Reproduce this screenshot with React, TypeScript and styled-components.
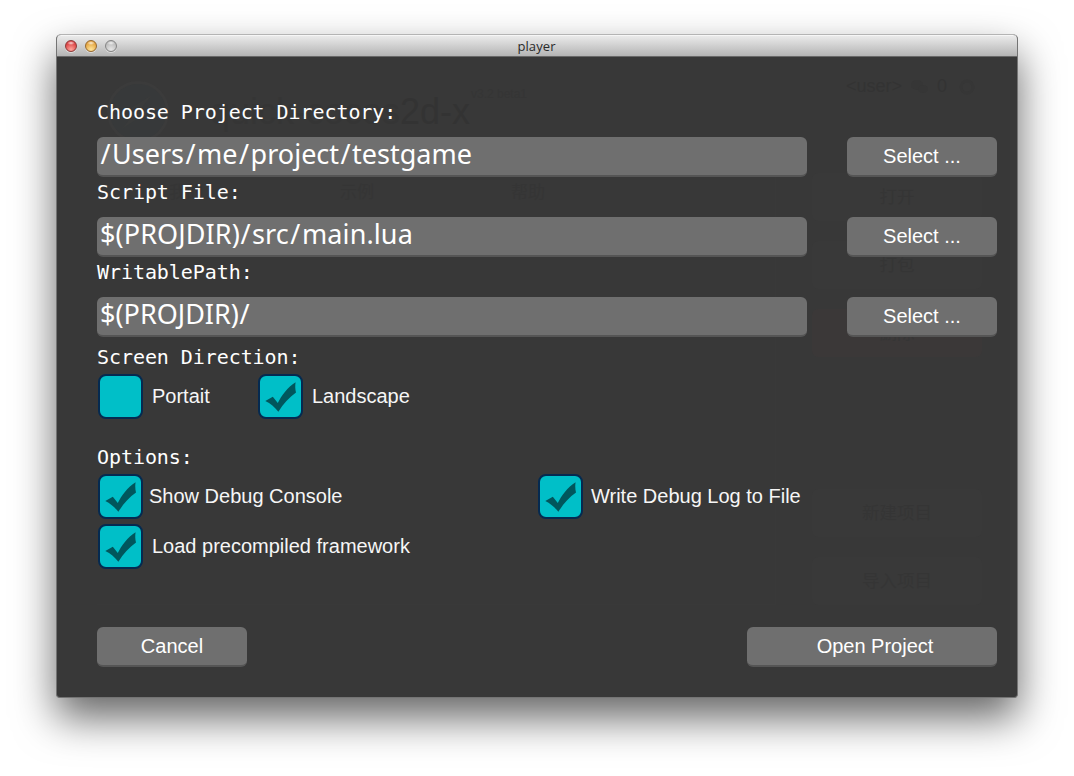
import React from 'react';
import styled, { createGlobalStyle } from 'styled-components';

const GlobalStyle = createGlobalStyle`
  * { box-sizing: border-box; }
  body { margin: 0; background: #fff; overflow: hidden; }
`;

const Desktop = styled.div`
  width: 1074px;
  height: 776px;
  padding: 34px 56px 0;
  font-family: 'Liberation Sans', Arial, sans-serif;
`;

const Window = styled.main`
  width: 962px;
  height: 664px;
  border: 1px solid #747474;
  border-top-color: #b4b4b4;
  border-radius: 5px 5px 4px 4px;
  background: #383838;
  overflow: hidden;
  box-shadow: 0 20px 42px rgba(0, 0, 0, 0.6);
`;

const TitleBar = styled.header`
  display: grid;
  grid-template-columns: 1fr auto 1fr;
  align-items: center;
  height: 22px;
  padding: 0 8px 1px;
  background: linear-gradient(#eaeaea, #b4b4b4);
  border-top: 1px solid #f6f6f6;
  border-bottom: 1px solid #686868;
`;

const Lights = styled.div`
  display: flex;
  gap: 8px;
`;

const Light = styled.span<{ $rim: string; $from: string; $to: string }>`
  width: 12px;
  height: 12px;
  border-radius: 50%;
  border: 1px solid ${(p) => p.$rim};
  background: radial-gradient(ellipse 4px 2px at 50% 20%, rgba(255, 255, 255, 0.8), transparent),
    radial-gradient(circle at 50% 85%, ${(p) => p.$to}, ${(p) => p.$from} 75%);
  box-shadow: 0 1px 0 rgba(255, 255, 255, 0.45);
`;

const Title = styled.h1`
  margin: 0 1px 0 0;
  font: 500 13px/18px 'Open Sans', sans-serif;
  letter-spacing: 0.1px;
  color: #2a2a2a;
`;

const Content = styled.div`
  position: relative;
  height: 640px;
`;

const Backdrop = styled.div`
  position: absolute;
  inset: 0;
  padding: 24px 35px 0 40px;
  font-family: 'Liberation Sans', 'Noto Sans CJK SC', sans-serif;
`;

const BackdropHead = styled.div`
  display: flex;
  align-items: flex-start;
  height: 92px;
`;

const Product = styled.span`
  width: 294px;
  margin-left: 7px;
  font-size: 36px;
  line-height: 61px;
  white-space: nowrap;
  text-align: right;
  color: #353535;
`;

const ProductSuffix = styled.span`
  color: #333;
`;

const Version = styled.span`
  flex: 1;
  margin-left: 1px;
  font-size: 12px;
  line-height: 26px;
  color: #353535;
`;

const Account = styled.div`
  display: flex;
  align-items: center;
  gap: 8px;
  height: 11px;
  margin-right: 5px;
  font-size: 18px;
  color: #333;
`;

const BackdropBody = styled.div`
  display: flex;
  justify-content: space-between;
`;

const BackdropTabs = styled.div`
  display: flex;
  gap: 21px;
  width: 679px;
  height: 432px;
  padding-left: 14px;
  font-size: 17px;
  line-height: 40px;
  border-right: 1px solid #393939;
  border-bottom: 1px solid #393939;
`;

const BackdropTab = styled.span`
  width: 150px;
  height: 40px;
  text-align: center;
  color: #353535;
`;

const BackdropActions = styled.div`
  display: flex;
  flex-direction: column;
  gap: 20px;
`;

const BackdropAction = styled.span<{ $tint?: string; $push?: boolean }>`
  width: 170px;
  height: 48px;
  margin-top: ${(p) => (p.$push ? '112px' : '0')};
  border-radius: 6px;
  font-size: 17.5px;
  line-height: 48px;
  text-align: center;
  background: ${(p) => p.$tint ?? '#393939'};
  color: #353535;
`;

const Form = styled.form`
  position: relative;
  display: flex;
  flex-direction: column;
  height: 100%;
  padding: 40px 20px 30px 40px;
`;

const Label = styled.div<{ $height?: number; $drop?: number }>`
  height: ${(p) => p.$height ?? 40}px;
  padding-top: ${(p) => p.$drop ?? 0}px;
  font: 20px/30px 'DejaVu Sans Mono', monospace;
  letter-spacing: -0.07px;
  color: #fff;
`;

const Row = styled.div`
  display: flex;
  justify-content: space-between;
  height: 40px;
`;

const Field = styled.div`
  width: 710px;
  height: 40px;
  padding-left: 3px;
  border-radius: 6px;
  border-bottom: 2px solid #555;
  background: #6f6f6f;
  color: #fff;
  font: 27px/34px 'Noto Sans', sans-serif;
  white-space: nowrap;
`;

const PathText = styled.span<{ $spacing: number }>`
  letter-spacing: ${(p) => p.$spacing}px;
`;

const Slash = styled.span`
  margin: 0 1.5px;

  &:first-child {
    margin-left: 0.5px;
  }
`;

const Button = styled.button<{ $width: number; $shift?: number }>`
  width: ${(p) => p.$width}px;
  height: 40px;
  padding: 0 0 0 ${(p) => p.$shift ?? 0}px;
  border: 0;
  border-bottom: 2px solid #555;
  border-radius: 6px;
  background: #6f6f6f;
  color: #fff;
  font: 20px/38px 'Liberation Sans', Arial, sans-serif;
`;

const Options = styled.div<{ $height: number }>`
  display: grid;
  grid-template-columns: 160px 280px 1fr;
  height: ${(p) => p.$height}px;
  padding: 2px 0 0 1px;
`;

const Option = styled.div<{ $gap: number; $wide?: boolean }>`
  display: flex;
  gap: ${(p) => p.$gap}px;
  grid-column: ${(p) => (p.$wide ? 'span 2' : 'auto')};
  height: 45px;
  color: #f6f6f6;
  font-size: 20px;
  line-height: 44px;
  white-space: nowrap;
`;

const Box = styled.span`
  display: block;
  flex: none;
  width: 45px;
  height: 45px;
  border: 2px solid #052a50;
  border-radius: 8px;
  background: #00bfc8;
`;

const Footer = styled(Row)`
  margin-top: auto;
`;

function Check({ on }: { on?: boolean }) {
  return (
    <Box>
      {on && (
        <svg width="41" height="41" viewBox="1 1 41 41" display="block">
          <path
            d="M6.3 26.1 L13.8 21.8 L18.8 28 C22.5 20.5 28.6 12 36.6 7.2 C36 10.4 36.2 14 37 17.6 C30.2 22.4 24.2 29 19.4 36.8 C15.6 32.3 11.6 28.6 6.3 26.1 Z"
            fill="#00565c"
          />
        </svg>
      )}
    </Box>
  );
}

const paths = [
  { label: 'Choose Project Directory:', value: '/Users/me/project/testgame', spacing: 0 },
  { label: 'Script File:', value: '$(PROJDIR)/src/main.lua', spacing: 0.1 },
  { label: 'WritablePath:', value: '$(PROJDIR)/', spacing: 0 },
];

function Path({ value, spacing }: { value: string; spacing: number }) {
  return (
    <PathText $spacing={spacing}>
      {value.split('/').map((part, i) => (
        <React.Fragment key={i}>
          {i > 0 && <Slash>/</Slash>}
          {part}
        </React.Fragment>
      ))}
    </PathText>
  );
}

export default function App() {
  return (
    <>
      <GlobalStyle />
      <Desktop>
        <Window>
          <TitleBar>
            <Lights>
              <Light $rim="#8d3a38" $from="#d93a3c" $to="#ffa69c" />
              <Light $rim="#96692f" $from="#e2a03a" $to="#ffe59b" />
              <Light $rim="#858585" $from="#b9b9b9" $to="#e6e6e6" />
            </Lights>
            <Title>player</Title>
          </TitleBar>
          <Content>
            <Backdrop aria-hidden="true">
              <BackdropHead>
                <svg width="72" height="66" viewBox="0 0 72 66">
                  <circle cx="41" cy="31" r="29.5" fill="#37393a" stroke="#3b3b3b" strokeWidth="3" />
                  <path d="M55 14 L34 27 L39 30 L25 48 L46 34 L41 31 Z" fill="#3a3b3b" />
                </svg>
                <Product>
                  quick-cocos<ProductSuffix>2d-x</ProductSuffix>
                </Product>
                <Version>v3.2 beta1</Version>
                <Account>
                  <span>&lt;user&gt;</span>
                  <svg width="19" height="16" viewBox="0 0 19 16" fill="#363636">
                    <ellipse cx="7" cy="6" rx="6" ry="5" />
                    <ellipse cx="13" cy="10" rx="5" ry="4" />
                  </svg>
                  <span>0</span>
                  <svg width="22" height="18" viewBox="0 0 22 18" fill="none" stroke="#363636" strokeWidth="3">
                    <circle cx="12" cy="9" r="6" />
                  </svg>
                </Account>
              </BackdropHead>
              <BackdropBody>
                <BackdropTabs>
                  <BackdropTab>我的</BackdropTab>
                  <BackdropTab>示例</BackdropTab>
                  <BackdropTab>帮助</BackdropTab>
                </BackdropTabs>
                <BackdropActions>
                  <BackdropAction>打开</BackdropAction>
                  <BackdropAction>打包</BackdropAction>
                  <BackdropAction $tint="#3b3838">删除</BackdropAction>
                  <BackdropAction $push>新建项目</BackdropAction>
                  <BackdropAction>导入项目</BackdropAction>
                </BackdropActions>
              </BackdropBody>
            </Backdrop>
            <Form onSubmit={(e) => e.preventDefault()}>
              {paths.map((p) => (
                <React.Fragment key={p.label}>
                  <Label>{p.label}</Label>
                  <Row>
                    <Field>
                      <Path value={p.value} spacing={p.spacing} />
                    </Field>
                    <Button type="button" $width={150}>Select ...</Button>
                  </Row>
                </React.Fragment>
              ))}
              <Label $height={35} $drop={5}>Screen Direction:</Label>
              <Options $height={65}>
                <Option $gap={9}><Check />Portait</Option>
                <Option $gap={9}><Check on />Landscape</Option>
              </Options>
              <Label $height={35} $drop={5}>Options:</Label>
              <Options $height={50}>
                <Option $gap={6} $wide><Check on />Show Debug Console</Option>
                <Option $gap={8}><Check on />Write Debug Log to File</Option>
              </Options>
              <Options $height={50}>
                <Option $gap={9} $wide><Check on />Load precompiled framework</Option>
              </Options>
              <Footer>
                <Button type="button" $width={150}>Cancel</Button>
                <Button type="submit" $width={250} $shift={6}>Open Project</Button>
              </Footer>
            </Form>
          </Content>
        </Window>
      </Desktop>
    </>
  );
}
